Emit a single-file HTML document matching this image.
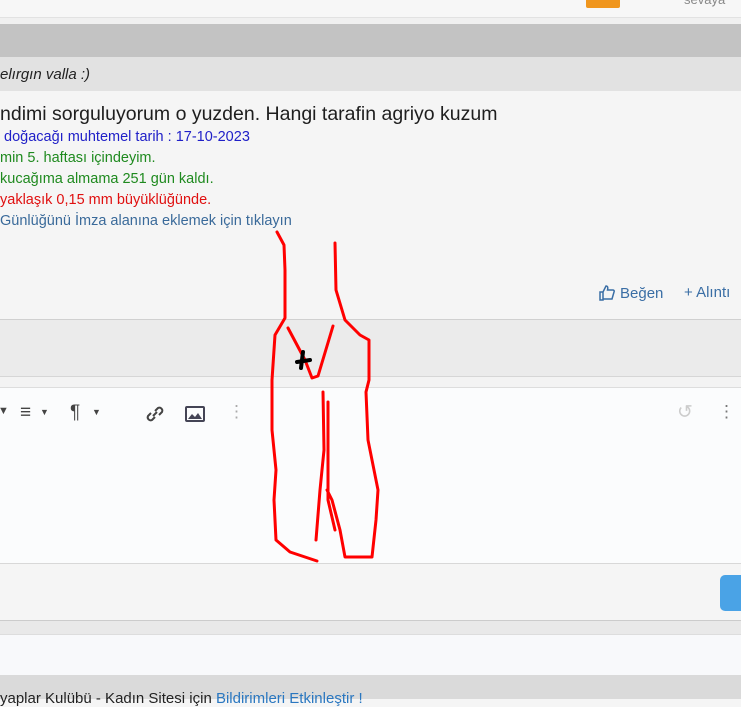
<!DOCTYPE html>
<html><head><meta charset="utf-8"><style>
body{margin:0;width:741px;height:699px;overflow:hidden;background:#f5f5f5;font-family:"Liberation Sans",sans-serif;position:relative}
div.a{position:absolute;left:0;width:741px}
.t{position:absolute;white-space:nowrap;font-size:14.5px}
</style></head><body>
<div class="a" style="top:0;height:17px;background:#f7f7f7;border-bottom:1px solid #e2e2e2"></div>
<div style="position:absolute;left:586px;top:0;width:34px;height:8px;background:#f0961e;border-radius:0 0 2px 2px"></div>
<div class="t" style="left:684px;top:-8px;color:#888;font-size:13px">sevaya</div>
<div class="a" style="top:18px;height:6px;background:#f0f0f0"></div>
<div class="a" style="top:24px;height:33px;background:#c3c3c3"></div>
<div class="a" style="top:57px;height:34px;background:#e2e2e2"></div>
<div class="t" style="left:0;top:66px;font-style:italic;color:#222;font-size:15px">elırgın valla :)</div>
<div class="a" style="top:91px;height:228px;background:#f5f5f5"></div>
<div class="t" style="left:0;top:103px;font-size:19.5px;color:#1e1e1e">ndimi sorguluyorum o yuzden. Hangi tarafin agriyo kuzum</div>
<div class="t" style="left:0;top:129px;color:#2020c8">&nbsp;doğacağı muhtemel tarih : 17-10-2023</div>
<div class="t" style="left:0;top:150px;color:#1f8a1f">min 5. haftası içindeyim.</div>
<div class="t" style="left:0;top:171px;color:#1f8a1f">kucağıma almama 251 gün kaldı.</div>
<div class="t" style="left:0;top:192px;color:#e01010">yaklaşık 0,15 mm büyüklüğünde.</div>
<div class="t" style="left:0;top:213px;color:#3a6a9a">Günlüğünü İmza alanına eklemek için tıklayın</div>
<svg style="position:absolute;left:599px;top:285px" width="16" height="16" fill="none" stroke="#3a6ea5" stroke-width="1.5"><path d="M1 7h3v8H1zM4 7l3-6c2 0 2 2 1.5 4H14c1 0 1.5 1 1 2l-2 7H4"/></svg>
<div class="t" style="left:620px;top:285px;color:#3a6ea5;font-size:15px">Beğen</div>
<div class="t" style="left:684px;top:284px;color:#3a6ea5;font-size:15px">+ Alıntı</div>
<div class="a" style="top:319px;height:56px;background:#ebebeb;border-top:1px solid #d0d0d0;border-bottom:1px solid #d6d6d6"></div>
<div class="a" style="top:377px;height:10px;background:#f3f3f3;border-bottom:1px solid #ddd"></div>
<div class="a" style="top:388px;height:175px;background:#fbfcfd;border-bottom:1px solid #d8d8d8"></div>
<div class="t" style="left:-2px;top:405px;color:#444;font-size:11px">▼</div>
<div class="t" style="left:20px;top:402px;color:#444;font-size:19px">≡</div>
<div class="t" style="left:40px;top:407px;color:#444;font-size:9px">▼</div>
<div class="t" style="left:70px;top:402px;color:#444;font-size:19px">¶</div>
<div class="t" style="left:92px;top:407px;color:#444;font-size:9px">▼</div>
<svg style="position:absolute;left:145px;top:404px" width="20" height="20" fill="none" stroke="#444" stroke-width="2"><path d="M8 12l4-4M6 9l-3 3a3 3 0 0 0 4 4l3-3M14 11l3-3a3 3 0 0 0-4-4l-3 3"/></svg>
<div style="position:absolute;left:185px;top:406px;width:20px;height:16px;border:2px solid #445;box-sizing:border-box;border-radius:2px"></div>
<svg style="position:absolute;left:187px;top:408px" width="16" height="12"><path d="M1 11l4-5 3 3 3-4 4 6z" fill="#445"/></svg>
<div class="t" style="left:228px;top:402px;color:#aaa;font-size:17px">⋮</div>
<div class="t" style="left:677px;top:401px;color:#ccc;font-size:19px">↺</div>
<div class="t" style="left:718px;top:402px;color:#777;font-size:17px">⋮</div>
<div class="a" style="top:564px;height:56px;background:#f5f5f5;border-bottom:1px solid #ccc"></div>
<div style="position:absolute;left:720px;top:575px;width:30px;height:36px;background:#4aa3e6;border-radius:5px"></div>
<div class="a" style="top:621px;height:13px;background:#e9e9e9;border-bottom:1px solid #ddd"></div>
<div class="a" style="top:635px;height:40px;background:#f8f9fb"></div>
<div class="a" style="top:675px;height:24px;background:#dadada"></div>
<div class="t" style="left:0;top:690px;color:#222;font-size:15px">yaplar Kulübü - Kadın Sitesi için <span style="color:#2a77c0">Bildirimleri Etkinleştir !</span></div>
<svg style="position:absolute;left:0;top:0" width="741" height="699" fill="none" stroke="#f00" stroke-width="3" stroke-linejoin="round" stroke-linecap="round">
<path d="M277 232 L284 245 L285 270 L285 318 L275 335 L272 380 L272 430 L276 470 L274 500 L276 540 L290 552 L317 561"/>
<path d="M335 243 L336 290 L345 320 L360 335 L369 340 L369 380 L366 392 L368 440 L378 490 L376 520 L372 557 L345 557 L340 530 L332 500 L327 490"/>
<path d="M323 392 L324 450 L320 490 L316 540"/>
<path d="M328 402 L328 500 L335 530"/>
<path d="M288 328 L305 360 L312 378 L318 376 L333 326"/>
<path d="M297 362 L310 360 M303 352 L301 368" stroke="#000" stroke-width="4"/>
</svg>
</body></html>
